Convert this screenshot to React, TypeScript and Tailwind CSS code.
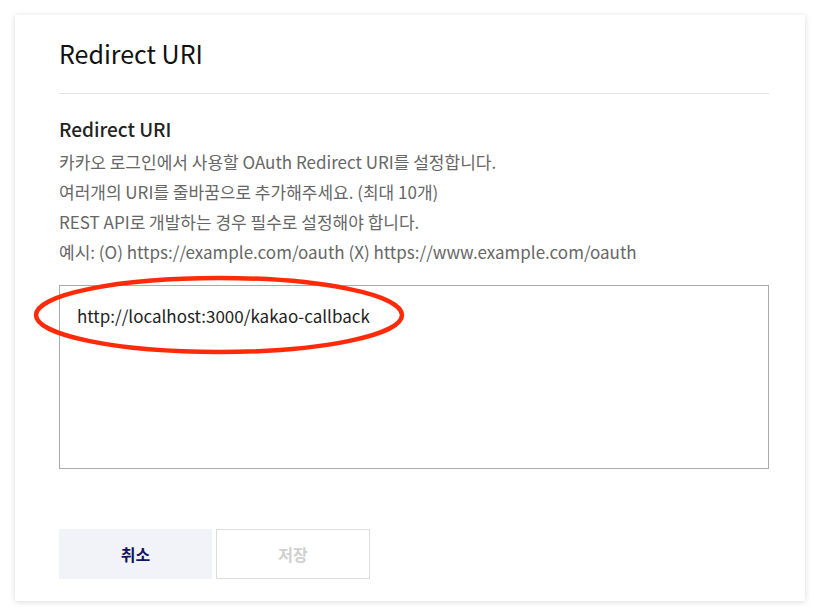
const font = { fontFamily: '"Noto Sans CJK KR", "Noto Sans", sans-serif' }

export default function App() {
  return (
    <div className="min-h-[616px] w-[820px] bg-white pt-[15px]" style={font}>
      <div className="mx-[15px] h-[586px] bg-white pl-[44px] pr-[36px] shadow-[0_1px_6px_rgba(0,0,0,0.15)]">
        <h1 className="pt-[23px] pb-[24px] text-[25px] leading-[31px] text-[#111]">Redirect URI</h1>
        <div className="border-t border-[#e2e2e2]" />

        <h2 className="mt-[21px] text-[19px] leading-[28px] font-medium text-[#222]">Redirect URI</h2>
        <div className="mt-[4px] text-[17px] leading-[30px] text-[#666]">
          <p>카카오 로그인에서 사용할 OAuth Redirect URI를 설정합니다.</p>
          <p>여러개의 URI를 줄바꿈으로 추가해주세요. (최대 10개)</p>
          <p>REST API로 개발하는 경우 필수로 설정해야 합니다.</p>
          <p>예시: (O) https://example.com/oauth (X) https://www.example.com/oauth</p>
        </div>

        <div className="relative mt-[18px]">
          <div className="h-[184px] border border-[#aaa] px-[17px] pt-[16px] text-[17px] leading-[28px] text-[#222]">
            http://localhost:3000/kakao-callback
          </div>
          <svg
            className="pointer-events-none absolute left-[-26px] top-[-10px]"
            width="380"
            height="82"
            viewBox="0 0 380 82"
          >
            <ellipse cx="186" cy="40" rx="183" ry="37" fill="none" stroke="#ff2a0a" strokeWidth="4.5" />
          </svg>
        </div>

        <div className="mt-[60px] flex gap-[4px]">
          <button className="h-[50px] w-[153px] bg-[#f2f3f9] text-[16px] font-bold text-[#13135f]">취소</button>
          <button className="h-[50px] w-[154px] border border-[#dcdcdc] bg-white text-[16px] font-bold text-[#d0d0d0]">
            저장
          </button>
        </div>
      </div>
    </div>
  )
}
